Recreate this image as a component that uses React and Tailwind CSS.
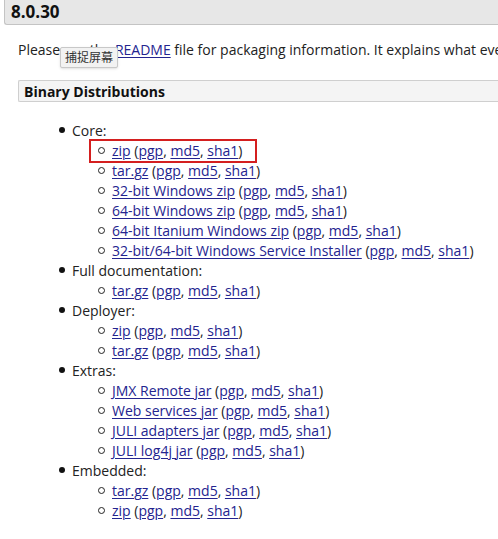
import React from "react";

const sums = ["pgp", "md5", "sha1"];

const Link = ({ children }) => (
  <a href="#" className="text-[#24248f] underline underline-offset-2 decoration-1">
    {children}
  </a>
);

const Item = ({ label }) => (
  <div className="flex items-center h-[20px] pl-[98px]">
    <span className="w-[7px] h-[7px] rounded-full border-[1.5px] border-[#222] mr-[7px]" />
    <span>
      <Link>{label}</Link> (
      {sums.map((s, i) => (
        <React.Fragment key={s}>
          <Link>{s}</Link>
          {i < 2 && ", "}
        </React.Fragment>
      ))}
      )
    </span>
  </div>
);

const Group = ({ title, items, highlight }) => (
  <div>
    <div className="flex items-center h-[20px] pl-[59px]">
      <span className="w-[6px] h-[6px] rounded-full bg-[#111] mr-[7px]" />
      <span>{title}</span>
    </div>
    {items.map((label, i) =>
      highlight && i === 0 ? (
        <div key={i} className="relative">
          <Item label={label} />
          <div className="absolute left-[89px] top-[-1px] w-[168px] h-[24px] border-2 border-[#d41f1f]" />
        </div>
      ) : (
        <Item key={i} label={label} />
      )
    )}
  </div>
);

const groups = [
  {
    title: "Core:",
    highlight: true,
    items: [
      "zip",
      "tar.gz",
      "32-bit Windows zip",
      "64-bit Windows zip",
      "64-bit Itanium Windows zip",
      "32-bit/64-bit Windows Service Installer",
    ],
  },
  { title: "Full documentation:", items: ["tar.gz"] },
  { title: "Deployer:", items: ["zip", "tar.gz"] },
  {
    title: "Extras:",
    items: ["JMX Remote jar", "Web services jar", "JULI adapters jar", "JULI log4j jar"],
  },
  { title: "Embedded:", items: ["tar.gz", "zip"] },
];

export default function App() {
  return (
    <div
      className="relative w-[498px] h-[539px] overflow-hidden bg-white text-[14px] text-[#222]"
      style={{ fontFamily: '"Open Sans", "Noto Sans CJK SC", sans-serif' }}
    >
      {/* version header */}
      <div className="ml-[4px] h-[25px] bg-[#e7e7e7] border-l border-b border-[#c4c4c4] rounded-bl-[3px] flex items-center pl-[6px]">
        <span className="font-bold text-[17px] text-[#111]">8.0.30</span>
      </div>

      <p className="mt-[15px] ml-[18px] h-[20px] leading-[20px] whitespace-nowrap">
        Please see the <Link>README</Link> file for packaging information. It explains what every
        distribution contains.
      </p>

      <div className="mt-[20px] ml-[18px] h-[22px] bg-[#f4f4f4] border-y border-l border-[#cfcfcf] rounded-l-[2px] flex items-center pl-[5px]">
        <span className="font-bold text-[14px] text-[#111]">Binary Distributions</span>
      </div>

      <div className="mt-[18px]">
        {groups.map((g) => (
          <Group key={g.title} {...g} />
        ))}
      </div>

      {/* tooltip */}
      <div className="absolute left-[60px] top-[47px] h-[21px] px-[4px] bg-[#f2f2f2] border border-[#c8c8c8] rounded-[2px] shadow-sm flex items-center text-[12px] text-[#333]">
        捕捉屏幕
      </div>
    </div>
  );
}
